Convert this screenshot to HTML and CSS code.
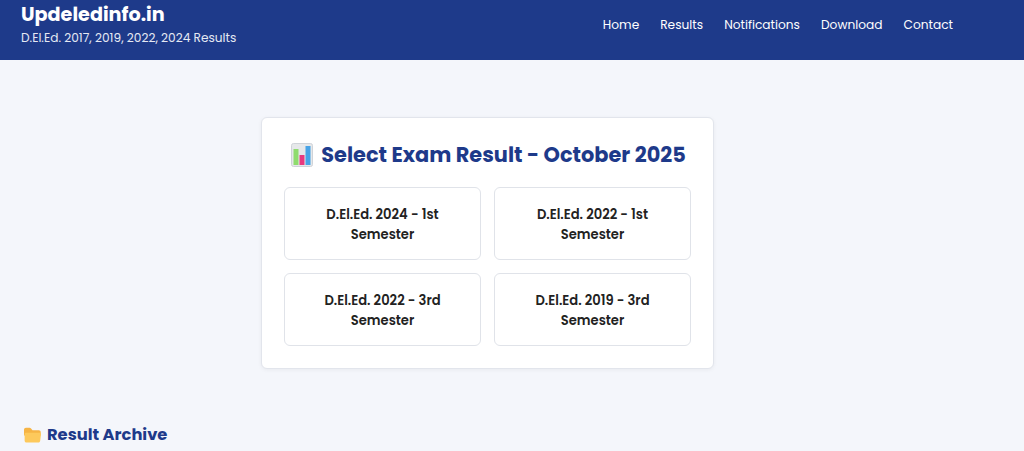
FILE: index.html
```html
<!DOCTYPE html>
<html lang="en">
<head>
<meta charset="utf-8">
<title>Updeledinfo.in</title>
<link rel="stylesheet" href="styles.css">
</head>
<body>
<header class="site-header">
  <div class="brand">
    <h1 class="brand-name">Updeledinfo.in</h1>
    <p class="brand-tag">D.El.Ed. 2017, 2019, 2022, 2024 Results</p>
  </div>
  <nav class="nav">
    <a href="#">Home</a>
    <a href="#">Results</a>
    <a href="#">Notifications</a>
    <a href="#">Download</a>
    <a href="#">Contact</a>
  </nav>
</header>
<main class="main">
  <section class="card">
    <h2 class="card-title"><svg class="ico-chart" viewBox="0 0 22 24"><rect x="0.5" y="0.5" width="21" height="23" rx="2" fill="#e6e8ea" stroke="#cfd3d8"/><rect x="2.5" y="6" width="5" height="16" fill="#8fdc6e"/><rect x="8.500" y="12" width="5" height="10" fill="#e8397f"/><rect x="14.500" y="3" width="5" height="19" fill="#47a3e6"/></svg><span>Select Exam Result - October 2025</span></h2>
    <div class="grid">
      <a class="tile" href="#">D.El.Ed. 2024 - 1st Semester</a>
      <a class="tile" href="#">D.El.Ed. 2022 - 1st Semester</a>
      <a class="tile" href="#">D.El.Ed. 2022 - 3rd Semester</a>
      <a class="tile" href="#">D.El.Ed. 2019 - 3rd Semester</a>
    </div>
  </section>
  <h3 class="archive"><svg class="ico-folder" viewBox="0 0 16 15"><path d="M0 2.500C0 1.400.8.6 1.800.6h3.400c.6 0 1 .2 1.400.7L8 3h6c1 0 1.700.7 1.700 1.700V8H0z" fill="#f6b445"/><path d="M.6 6.400C.8 5.700 1.400 5.300 2 5.300h12.600c.9 0 1.500.7 1.400 1.500l-.8 6.400c-.1.800-.8 1.400-1.600 1.400H2.200c-.8 0-1.500-.6-1.600-1.400z" fill="#fdc95c"/></svg><span>Result Archive</span></h3>
</main>
</body>
</html>
```
FILE: styles.css
```css
* { box-sizing: border-box; }
html, body { margin: 0; padding: 0; height: 100%; overflow: hidden; }
body { background: #f4f6fb; font-family: Poppins, "Open Sans", Lato, "Noto Sans", sans-serif; color: #222; }
.site-header { height: 60px; background: #1e3a8a; color: #fff; display: flex; justify-content: space-between; padding: 0 71px 0 21px; }
.brand { padding-top: 2px; }
.brand-name { margin: 0; font-size: 19.2px; line-height: 26px; font-weight: 700; }
.brand-tag { margin: 1px 0 0; font-size: 12.16px; line-height: 18px; color: #e5e9f3; }
.nav { display: flex; gap: 21px; align-items: center; height: 49px; font-size: 12.2px; }
.nav a { color: #fff; text-decoration: none; }
.main { padding: 57px 73px 0 24px; }
.card { width: 453px; height: 252px; margin: 0 auto; background: #fff; border: 1px solid #e2e5ec; border-radius: 6px; padding: 22px; box-shadow: 0 1px 4px rgba(0,0,0,.05); }
.card-title { margin: 0 0 17px; padding-left: 2px; font-size: 20.88px; line-height: 30px; font-weight: 700; color: #1e3a8a; display: flex; justify-content: center; align-items: center; gap: 8px; white-space: nowrap; }
.ico-chart { width: 22px; height: 24px; flex: none; }
.grid { display: grid; grid-template-columns: 1fr 1fr; gap: 13px; }
.tile { height: 73px; border: 1px solid #e0e3e9; border-radius: 6px; display: flex; align-items: center; justify-content: center; text-align: center; padding: 2px 30px 0; font-size: 13.12px; line-height: 20px; font-weight: 600; color: #222; text-decoration: none; }
.archive { margin: 54px 0 0; font-size: 16.3px; line-height: 24px; font-weight: 700; color: #1e3a8a; display: flex; align-items: center; gap: 6px; }
.ico-folder { width: 17px; height: 16px; flex: none; }
```
